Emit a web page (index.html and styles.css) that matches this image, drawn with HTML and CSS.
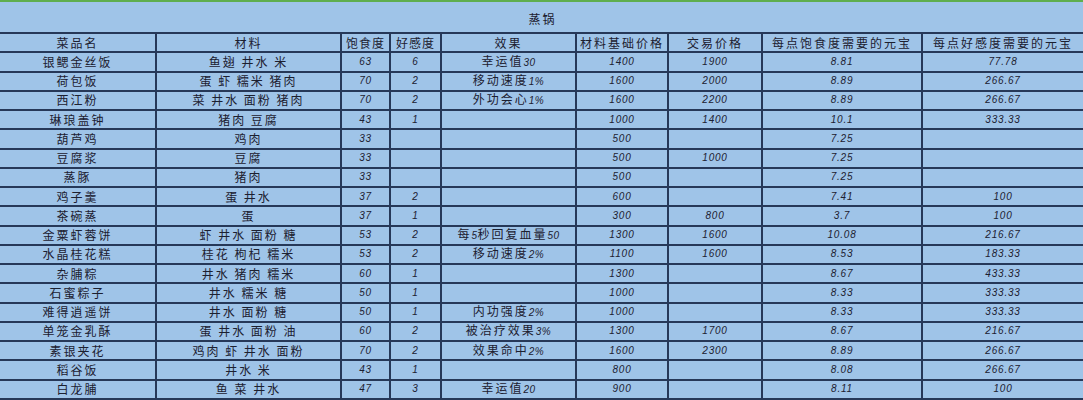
FILE: index.html
```html
<!DOCTYPE html>
<html lang="zh">
<head>
<meta charset="utf-8">
<title>蒸锅</title>
<link rel="stylesheet" href="styles.css">
</head>
<body>
<div class="sheet">
  <div class="title">蒸锅</div>
  <table class="grid">
    <colgroup>
      <col class="c1"><col class="c2"><col class="c3"><col class="c4"><col class="c5"><col class="c6"><col class="c7"><col class="c8"><col class="c9">
    </colgroup>
    <thead>
      <tr><th>菜品名</th><th>材料</th><th class="tight">饱食度</th><th class="tight">好感度</th><th>效果</th><th>材料基础价格</th><th>交易价格</th><th>每点饱食度需要的元宝</th><th>每点好感度需要的元宝</th></tr>
    </thead>
    <tbody>
      <tr><td>银鳃金丝饭</td><td>鱼翅 井水 米</td><td class="n">63</td><td class="n">6</td><td>幸运值<span class="d">30</span></td><td class="n">1400</td><td class="n">1900</td><td class="n">8.81</td><td class="n">77.78</td></tr>
      <tr><td>荷包饭</td><td>蛋 虾 糯米 猪肉</td><td class="n">70</td><td class="n">2</td><td>移动速度<span class="d">1%</span></td><td class="n">1600</td><td class="n">2000</td><td class="n">8.89</td><td class="n">266.67</td></tr>
      <tr><td>西江粉</td><td>菜 井水 面粉 猪肉</td><td class="n">70</td><td class="n">2</td><td>外功会心<span class="d">1%</span></td><td class="n">1600</td><td class="n">2200</td><td class="n">8.89</td><td class="n">266.67</td></tr>
      <tr><td>琳琅盖钟</td><td>猪肉 豆腐</td><td class="n">43</td><td class="n">1</td><td></td><td class="n">1000</td><td class="n">1400</td><td class="n">10.1</td><td class="n">333.33</td></tr>
      <tr><td>葫芦鸡</td><td>鸡肉</td><td class="n">33</td><td></td><td></td><td class="n">500</td><td></td><td class="n">7.25</td><td></td></tr>
      <tr><td>豆腐浆</td><td>豆腐</td><td class="n">33</td><td></td><td></td><td class="n">500</td><td class="n">1000</td><td class="n">7.25</td><td></td></tr>
      <tr><td>蒸豚</td><td>猪肉</td><td class="n">33</td><td></td><td></td><td class="n">500</td><td></td><td class="n">7.25</td><td></td></tr>
      <tr><td>鸡子羹</td><td>蛋 井水</td><td class="n">37</td><td class="n">2</td><td></td><td class="n">600</td><td></td><td class="n">7.41</td><td class="n">100</td></tr>
      <tr><td>茶碗蒸</td><td>蛋</td><td class="n">37</td><td class="n">1</td><td></td><td class="n">300</td><td class="n">800</td><td class="n">3.7</td><td class="n">100</td></tr>
      <tr><td>金粟虾蓉饼</td><td>虾 井水 面粉 糖</td><td class="n">53</td><td class="n">2</td><td>每<span class="d">5</span>秒回复血量<span class="d">50</span></td><td class="n">1300</td><td class="n">1600</td><td class="n">10.08</td><td class="n">216.67</td></tr>
      <tr><td>水晶桂花糕</td><td>桂花 枸杞 糯米</td><td class="n">53</td><td class="n">2</td><td>移动速度<span class="d">2%</span></td><td class="n">1100</td><td class="n">1600</td><td class="n">8.53</td><td class="n">183.33</td></tr>
      <tr><td>杂脯粽</td><td>井水 猪肉 糯米</td><td class="n">60</td><td class="n">1</td><td></td><td class="n">1300</td><td></td><td class="n">8.67</td><td class="n">433.33</td></tr>
      <tr><td>石蜜粽子</td><td>井水 糯米 糖</td><td class="n">50</td><td class="n">1</td><td></td><td class="n">1000</td><td></td><td class="n">8.33</td><td class="n">333.33</td></tr>
      <tr><td>难得逍遥饼</td><td>井水 面粉 糖</td><td class="n">50</td><td class="n">1</td><td>内功强度<span class="d">2%</span></td><td class="n">1000</td><td></td><td class="n">8.33</td><td class="n">333.33</td></tr>
      <tr><td>单笼金乳酥</td><td>蛋 井水 面粉 油</td><td class="n">60</td><td class="n">2</td><td>被治疗效果<span class="d">3%</span></td><td class="n">1300</td><td class="n">1700</td><td class="n">8.67</td><td class="n">216.67</td></tr>
      <tr><td>素银夹花</td><td>鸡肉 虾 井水 面粉</td><td class="n">70</td><td class="n">2</td><td>效果命中<span class="d">2%</span></td><td class="n">1600</td><td class="n">2300</td><td class="n">8.89</td><td class="n">266.67</td></tr>
      <tr><td>稻谷饭</td><td>井水 米</td><td class="n">43</td><td class="n">1</td><td></td><td class="n">800</td><td></td><td class="n">8.08</td><td class="n">266.67</td></tr>
      <tr><td>白龙脯</td><td>鱼 菜 井水</td><td class="n">47</td><td class="n">3</td><td>幸运值<span class="d">20</span></td><td class="n">900</td><td></td><td class="n">8.11</td><td class="n">100</td></tr>
    </tbody>
  </table>
</div>
</body>
</html>
```

FILE: styles.css
```css
html, body {
  margin: 0;
  padding: 0;
  background: #9fc4e8;
}

.sheet {
  width: 1083px;
  height: 400px;
  overflow: hidden;
  background: #9fc4e8;
  border-top: 2px solid #5fae4e;
  box-sizing: border-box;
  font-family: "Noto Sans CJK SC", "Noto Sans", sans-serif;
  color: #1c2030;
}

.title {
  height: 30px;
  display: flex;
  align-items: center;
  justify-content: center;
  font-size: 12px;
  letter-spacing: 2px;
  padding-left: 2px;
  padding-top: 2px;
  box-sizing: border-box;
}

.grid {
  width: 1083px;
  border-collapse: collapse;
  table-layout: fixed;
}

.c1 { width: 156px; }
.c2 { width: 185px; }
.c3 { width: 49px; }
.c4 { width: 51px; }
.c5 { width: 135px; }
.c6 { width: 92px; }
.c7 { width: 94px; }
.c8 { width: 160px; }
.c9 { width: 161px; }

.grid tr {
  height: 19.25px;
}

.grid th,
.grid td {
  border: 2px solid #263858;
  padding: 0;
  text-align: center;
  vertical-align: middle;
  font-size: 12px;
  line-height: 14px;
  letter-spacing: 2px;
  font-weight: normal;
  white-space: nowrap;
  overflow: hidden;
}

.grid tr > :first-child { border-left: none; }
.grid tr > :last-child { border-right: none; }

.grid th.tight {
  letter-spacing: 1px;
}

.grid td.n {
  font-family: "Liberation Sans", "Noto Sans", sans-serif;
  font-style: italic;
  font-size: 10px;
  letter-spacing: 0.8px;
}

.d {
  font-family: "Liberation Sans", "Noto Sans", sans-serif;
  font-style: italic;
  font-size: 10px;
  letter-spacing: 0.5px;
}
```
